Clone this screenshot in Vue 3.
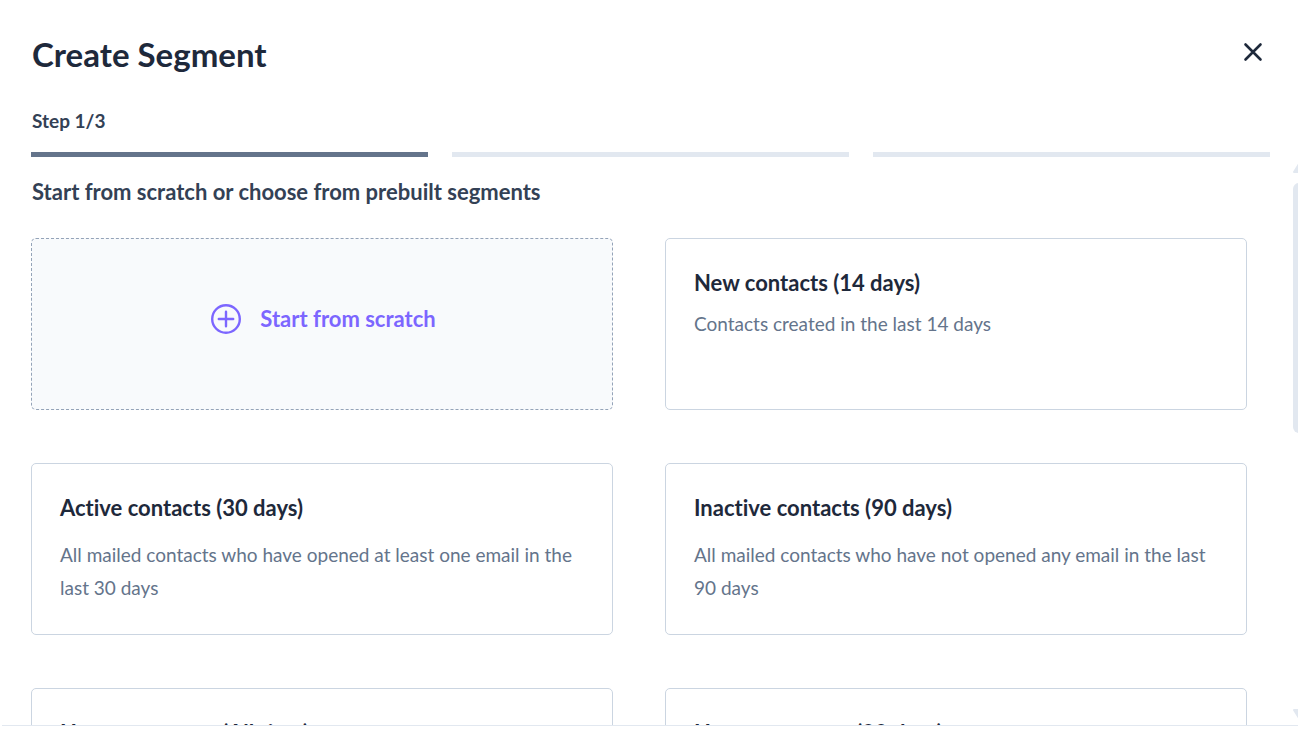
<script setup>
import { ref } from 'vue'

const step = ref(1)
const steps = [1, 2, 3]
const segments = [
  { title: 'New contacts (14 days)', text: 'Contacts created in the last 14 days', compact: true },
  { title: 'Active contacts (30 days)', text: 'All mailed contacts who have opened at least one email in the last 30 days' },
  { title: 'Inactive contacts (90 days)', text: 'All mailed contacts who have not opened any email in the last 90 days' },
  { title: 'Hyper-engagers (All time)' },
  { title: 'Hyper-engagers (90 days)' }
]
</script>

<template>
  <div class="dialog" role="dialog" aria-labelledby="dialog-title">
    <header class="head">
      <h1 id="dialog-title">Create Segment</h1>
      <button class="close" type="button" aria-label="Close">
        <svg width="20" height="20" viewBox="0 0 20 20" aria-hidden="true">
          <path d="M2.5 2.5 17.5 17.5M17.5 2.5 2.5 17.5" />
        </svg>
      </button>
    </header>

    <div class="progress">
      <p>Step {{ step }}/{{ steps.length }}</p>
      <div class="bars">
        <span v-for="n in steps" :key="n" class="bar" :class="{ done: n <= step }"></span>
      </div>
    </div>

    <div class="body">
      <main class="scroll">
        <h2>Start from scratch or choose from prebuilt segments</h2>
        <div class="grid">
          <button class="card scratch" type="button">
            <svg width="32" height="32" viewBox="0 0 32 32" aria-hidden="true">
              <circle cx="16" cy="16" r="13.8" />
              <path d="M16 8.8v14.4M8.8 16h14.4" />
            </svg>
            <span>Start from scratch</span>
          </button>
          <button v-for="s in segments" :key="s.title" class="card" :class="{ compact: s.compact }" type="button">
            <span class="name">{{ s.title }}</span>
            <span v-if="s.text" class="desc">{{ s.text }}</span>
          </button>
        </div>
      </main>
      <div class="rail" aria-hidden="true">
        <svg width="16" height="12" viewBox="0 0 16 12"><path d="M8 0 15 11H1Z" /></svg>
        <span class="thumb"></span>
        <svg width="16" height="12" viewBox="0 0 16 12"><path d="M8 12 15 1H1Z" /></svg>
      </div>
    </div>

    <footer class="foot"></footer>
  </div>
</template>

<style>
body {
  background: #fff;
}
</style>

<style scoped>
.dialog {
  display: flex;
  flex-direction: column;
  height: 100vh;
  margin: 0 2px;
  overflow: hidden;
  font-family: Lato, "Liberation Sans", sans-serif;
  font-variant-ligatures: none;
  color: #1e293b;
}
h1, h2, p {
  margin: 0;
}
button {
  font: inherit;
  font-variant-ligatures: none;
  color: inherit;
  cursor: pointer;
}
.head {
  display: flex;
  align-items: center;
  justify-content: space-between;
  padding: 32px 31px 0 30px;
}
h1 {
  font-size: 33px;
  line-height: 44px;
  font-weight: 700;
}
.close {
  display: flex;
  padding: 4px;
  margin-bottom: 4px;
  border: 0;
  background: none;
}
.close path {
  fill: none;
  stroke: #1e293b;
  stroke-width: 2.6;
  stroke-linecap: round;
}
.progress {
  padding: 32px 28px 0 29px;
}
.progress p {
  padding-left: 1px;
  font-size: 19px;
  line-height: 26px;
  font-weight: 700;
  color: #334155;
}
.bars {
  display: flex;
  gap: 24px;
  margin-top: 18px;
}
.bar {
  flex: 1;
  height: 5px;
  background: #e2e8f0;
}
.bar.done {
  background: #64748b;
}
.body {
  position: relative;
  flex: 1;
  min-height: 0;
  display: flex;
}
.scroll {
  flex: 1;
  overflow-y: auto;
  scrollbar-width: none;
  padding: 19px 51px 0 29px;
}
h2 {
  padding-left: 1px;
  font-size: 22px;
  line-height: 32px;
  font-weight: 700;
  color: #334155;
}
.grid {
  display: grid;
  grid-template-columns: 1fr 1fr;
  grid-auto-rows: 172px;
  gap: 53px 52px;
  margin-top: 30px;
}
.card {
  display: flex;
  flex-direction: column;
  gap: 14px;
  padding: 28px;
  border: 1px solid #cbd5e1;
  border-radius: 5px;
  background: #fff;
  text-align: left;
}
.card.compact {
  gap: 8px;
}
.name {
  font-size: 22px;
  line-height: 32px;
  font-weight: 700;
}
.desc {
  font-size: 19px;
  line-height: 33px;
  color: #64748b;
}
.scratch {
  flex-direction: row;
  align-items: center;
  justify-content: center;
  gap: 18px;
  padding: 28px 28px 38px 30px;
  border: 1px dashed #94a3b8;
  background: #f8fafc;
  font-size: 22px;
  line-height: 32px;
  font-weight: 700;
  color: #7c66ff;
}
.scratch svg {
  fill: none;
  stroke: #7c66ff;
  stroke-width: 2.4;
  stroke-linecap: round;
}
.rail {
  position: absolute;
  top: 4px;
  right: -11px;
  bottom: 4px;
  width: 16px;
  display: flex;
  flex-direction: column;
}
.rail svg {
  overflow: visible;
}
.rail path {
  fill: #e2e8f0;
  stroke: #e2e8f0;
  stroke-width: 2;
  stroke-linejoin: round;
}
.thumb {
  height: 250px;
  margin: 10px 0 auto;
  border-radius: 6px;
  background: #e2e8f0;
}
.foot {
  height: 28px;
  border-top: 1px solid #e2e8f0;
  background: #fff;
}
</style>
